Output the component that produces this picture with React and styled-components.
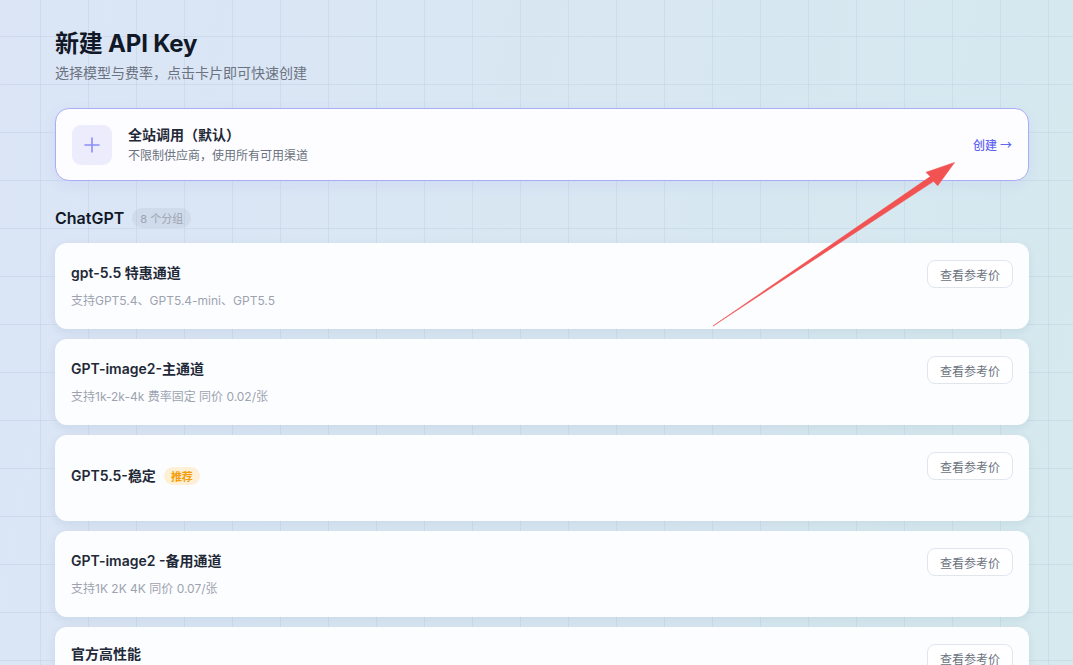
import React from 'react';
import styled, { createGlobalStyle } from 'styled-components';

const Global = createGlobalStyle`
  html, body { margin: 0; padding: 0; }
  body {
    font-family: Inter, "Noto Sans CJK SC", "Noto Sans", sans-serif;
    color: #111827;
  }
`;

const Page = styled.div`
  position: relative;
  min-height: 100vh;
  box-sizing: border-box;
  padding: 28px 44px 40px 55px;
  background-color: #d9e6f3;
  background-image:
    linear-gradient(rgba(110, 140, 180, 0.11) 1px, transparent 1px),
    linear-gradient(90deg, rgba(110, 140, 180, 0.11) 1px, transparent 1px),
    linear-gradient(100deg, #dbe5f6 0%, #d8e7f2 55%, #d5e9ee 100%);
  background-size: 48px 48px, 48px 48px, 100% 100%;
  background-position: 40px 36px, 40px 36px, 0 0;
  overflow: hidden;
`;

const Title = styled.h1`
  margin: 0;
  font-size: 24px;
  line-height: 32px;
  font-weight: 700;
  color: #111827;
  letter-spacing: -0.2px;
`;

const Subtitle = styled.p`
  margin: 3px 0 0;
  font-size: 14px;
  line-height: 20px;
  color: #6b7280;
`;

const DefaultCard = styled.div`
  margin-top: 25px;
  display: flex;
  align-items: center;
  gap: 16px;
  height: 73px;
  box-sizing: border-box;
  padding: 0 16px;
  background: #fdfdff;
  border: 1px solid #a9adf7;
  border-radius: 14px;
  box-shadow: 0 4px 14px rgba(99, 102, 241, 0.08);
`;

const IconBox = styled.div`
  width: 40px;
  height: 40px;
  border-radius: 9px;
  background: #ececfd;
  display: flex;
  align-items: center;
  justify-content: center;
  flex-shrink: 0;
`;

const Info = styled.div`
  flex: 1;
  display: flex;
  flex-direction: column;
  gap: 2px;
`;

const InfoTitle = styled.div`
  font-size: 14px;
  line-height: 20px;
  font-weight: 600;
  color: #1f2937;
`;

const InfoSub = styled.div`
  font-size: 12px;
  line-height: 18px;
  color: #6b7280;
`;

const CreateLink = styled.span`
  font-size: 12px;
  color: #6366f1;
  font-weight: 500;
  display: inline-flex;
  align-items: center;
  gap: 3px;
`;

const Arrow = styled.span`
  font-family: "Noto Sans CJK SC", sans-serif;
  font-size: 12px;
`;

const SectionHead = styled.div`
  margin-top: 27px;
  display: flex;
  align-items: center;
  gap: 8px;
  height: 20px;
`;

const SectionName = styled.h2`
  margin: 0;
  font-size: 16px;
  font-weight: 600;
  color: #111827;
`;

const CountBadge = styled.span`
  display: inline-flex;
  align-items: center;
  height: 20px;
  padding: 0 8px;
  border-radius: 10px;
  background: rgba(100, 116, 139, 0.09);
  font-size: 11px;
  color: #9ca3af;
`;

const List = styled.div`
  margin-top: 15px;
  display: flex;
  flex-direction: column;
  gap: 10px;
`;

const Card = styled.div`
  display: flex;
  align-items: flex-start;
  min-height: 86px;
  box-sizing: border-box;
  padding: 17px 16px 16px;
  background: #fcfdff;
  border-radius: 12px;
  box-shadow: 0 3px 10px rgba(30, 60, 100, 0.08);
`;

const CardBody = styled.div`
  flex: 1;
  align-self: center;
  display: flex;
  flex-direction: column;
  gap: 9px;
  padding-bottom: ${(p) => (p.$solo ? '6px' : '0')};
`;

const NameRow = styled.div`
  display: flex;
  align-items: center;
  gap: 8px;
`;

const CardName = styled.div`
  font-size: 14px;
  line-height: 20px;
  font-weight: 600;
  color: #1f2937;
`;

const CardDesc = styled.div`
  font-size: 12px;
  line-height: 18px;
  color: #9ca3af;
  white-space: pre-line;
`;

const Tag = styled.span`
  display: inline-flex;
  align-items: center;
  height: 18px;
  padding: 0 7px;
  border-radius: 9px;
  background: #fdf0d6;
  color: #f59e0b;
  font-size: 11px;
  font-weight: 600;
`;

const PriceButton = styled.button`
  flex-shrink: 0;
  height: 28px;
  width: 86px;
  border: 1px solid #e1e5ee;
  border-radius: 8px;
  background: #fff;
  color: #6b7280;
  font-family: inherit;
  font-size: 12px;
  cursor: pointer;
`;

const Overlay = styled.svg`
  position: absolute;
  left: 0;
  top: 0;
  pointer-events: none;
`;

const groups = [
  { name: 'gpt-5.5 特惠通道', desc: '支持GPT5.4、GPT5.4-mini、GPT5.5' },
  { name: 'GPT-image2-主通道', desc: '支持1k-2k-4k 费率固定 同价 0.02/张' },
  { name: 'GPT5.5-稳定', tag: '推荐' },
  { name: 'GPT-image2 -备用通道', desc: '支持1K 2K 4K 同价 0.07/张' },
  { name: '官方高性能', desc: '官方直连，稳定高速\n适合生产环境' },
];

export default function App() {
  return (
    <Page>
      <Global />
      <Title>新建 API Key</Title>
      <Subtitle>选择模型与费率，点击卡片即可快速创建</Subtitle>

      <DefaultCard>
        <IconBox>
          <svg width="16" height="16" viewBox="0 0 16 16" fill="none">
            <path d="M8 1v14M1 8h14" stroke="#8b8ef6" strokeWidth="1.6" strokeLinecap="round" />
          </svg>
        </IconBox>
        <Info>
          <InfoTitle>全站调用（默认）</InfoTitle>
          <InfoSub>不限制供应商，使用所有可用渠道</InfoSub>
        </Info>
        <CreateLink>
          创建<Arrow>→</Arrow>
        </CreateLink>
      </DefaultCard>

      <SectionHead>
        <SectionName>ChatGPT</SectionName>
        <CountBadge>8 个分组</CountBadge>
      </SectionHead>

      <List>
        {groups.map((g) => (
          <Card key={g.name}>
            <CardBody $solo={!g.desc}>
              <NameRow>
                <CardName>{g.name}</CardName>
                {g.tag && <Tag>{g.tag}</Tag>}
              </NameRow>
              {g.desc && <CardDesc>{g.desc}</CardDesc>}
            </CardBody>
            <PriceButton type="button">查看参考价</PriceButton>
          </Card>
        ))}
      </List>

      {/* annotation arrow drawn over the page */}
      <Overlay width="1073" height="665" viewBox="0 0 1073 665">
        <polygon
          points="713,326 930.3,176.6 926,172.3 954.5,162.5 937.7,185.7 933.6,181.3"
          fill="#f25252"
          stroke="#f25252"
          strokeWidth="0.6"
          strokeLinejoin="round"
        />
      </Overlay>
    </Page>
  );
}
